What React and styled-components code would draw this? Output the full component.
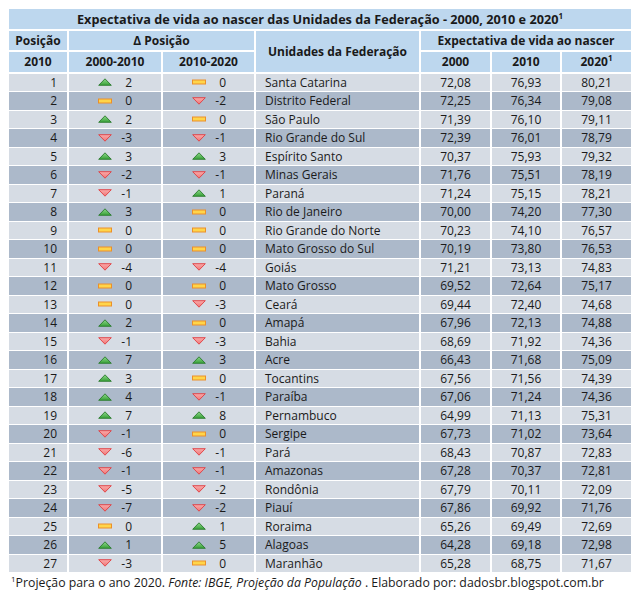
import styled, { createGlobalStyle } from "styled-components";

const GlobalStyle = createGlobalStyle`
  body {
    margin: 0;
    padding: 9px;
    background: #ffffff;
    font-family: "Open Sans", "Liberation Sans", sans-serif;
    font-size: 12px;
    color: #1a1a1a;
  }
`;

const COLS = "58px 92px 91px 163px 69px 68px 69px";

const rows = [
  ["Santa Catarina", 2, 0, "72,08", "76,93", "80,21"],
  ["Distrito Federal", 0, -2, "72,25", "76,34", "79,08"],
  ["São Paulo", 2, 0, "71,39", "76,10", "79,11"],
  ["Rio Grande do Sul", -3, -1, "72,39", "76,01", "78,79"],
  ["Espírito Santo", 3, 3, "70,37", "75,93", "79,32"],
  ["Minas Gerais", -2, -1, "71,76", "75,51", "78,19"],
  ["Paraná", -1, 1, "71,24", "75,15", "78,21"],
  ["Rio de Janeiro", 3, 0, "70,00", "74,20", "77,30"],
  ["Rio Grande do Norte", 0, 0, "70,23", "74,10", "76,57"],
  ["Mato Grosso do Sul", 0, 0, "70,19", "73,80", "76,53"],
  ["Goiás", -4, -4, "71,21", "73,13", "74,83"],
  ["Mato Grosso", 0, 0, "69,52", "72,64", "75,17"],
  ["Ceará", 0, -3, "69,44", "72,40", "74,68"],
  ["Amapá", 2, 0, "67,96", "72,13", "74,88"],
  ["Bahia", -1, -3, "68,69", "71,92", "74,36"],
  ["Acre", 7, 3, "66,43", "71,68", "75,09"],
  ["Tocantins", 3, 0, "67,56", "71,56", "74,39"],
  ["Paraíba", 4, -1, "67,06", "71,24", "74,36"],
  ["Pernambuco", 7, 8, "64,99", "71,13", "75,31"],
  ["Sergipe", -1, 0, "67,73", "71,02", "73,64"],
  ["Pará", -6, -1, "68,43", "70,87", "72,83"],
  ["Amazonas", -1, -1, "67,28", "70,37", "72,81"],
  ["Rondônia", -5, -2, "67,79", "70,11", "72,09"],
  ["Piauí", -7, -2, "67,86", "69,92", "71,76"],
  ["Roraima", 0, 1, "65,26", "69,49", "72,69"],
  ["Alagoas", 1, 5, "64,28", "69,18", "72,98"],
  ["Maranhão", -3, 0, "65,28", "68,75", "71,67"],
];

const Head = styled.div`
  display: grid;
  grid-template-columns: ${COLS};
  grid-template-rows: 19.5px 19.5px 19.5px;
  gap: 2px;
`;

const HeadCell = styled.div`
  background: #bdd7ee;
  font-weight: 700;
  font-size: ${(p) => p.$size || "12px"};
  display: flex;
  align-items: center;
  justify-content: center;
  white-space: nowrap;
  grid-column: ${(p) => p.$col || "auto"};
  grid-row: ${(p) => p.$row || "auto"};
`;

const Body = styled.div`
  display: flex;
  flex-direction: column;
  gap: 1px;
  margin-top: 2px;
`;

const Row = styled.div`
  display: grid;
  grid-template-columns: ${COLS};
  column-gap: 2px;
  height: 17.5px;
  & > div {
    background: ${(p) => (p.$dark ? "#acb9ca" : "#d6dce4")};
  }
`;

const Cell = styled.div`
  display: flex;
  align-items: center;
  white-space: nowrap;
  justify-content: ${(p) => p.$align || "center"};
  padding: 0 ${(p) => (p.$align === "flex-end" ? "10px" : "0")} 0
    ${(p) => (p.$align === "flex-start" ? "9px" : "0")};
`;

const DeltaCell = styled.div`
  display: flex;
  align-items: center;
  padding-left: 29px;
`;

const IconBox = styled.span`
  width: 14px;
  height: 8px;
  display: flex;
  align-items: center;
  justify-content: center;
`;

const DeltaNum = styled.span`
  width: 20px;
  text-align: right;
`;

const Sup = styled.sup`
  font-size: 8px;
  line-height: 0;
  vertical-align: 5px;
`;

const Note = styled.div`
  margin-top: 2px;
  padding-left: 2px;
  font-size: 12.3px;
  white-space: nowrap;
`;

const Up = () => (
  <svg width="14" height="8" viewBox="0 0 14 8">
    <defs>
      <linearGradient id="gUp" x1="0" y1="0" x2="0" y2="1">
        <stop offset="0" stopColor="#8fd88c" />
        <stop offset="1" stopColor="#36a036" />
      </linearGradient>
    </defs>
    <polygon points="7,0.8 13.3,7.3 0.7,7.3" fill="url(#gUp)" stroke="#2a7a2e" strokeWidth="0.9" />
  </svg>
);

const Down = () => (
  <svg width="14" height="8" viewBox="0 0 14 8">
    <defs>
      <linearGradient id="gDown" x1="0" y1="0" x2="0" y2="1">
        <stop offset="0" stopColor="#f9abab" />
        <stop offset="1" stopColor="#f07676" />
      </linearGradient>
    </defs>
    <polygon points="0.7,0.7 13.3,0.7 7,7.2" fill="url(#gDown)" stroke="#e03c40" strokeWidth="0.9" />
  </svg>
);

const Flat = () => (
  <svg width="14" height="8" viewBox="0 0 14 8">
    <rect x="0.5" y="2" width="13" height="4" fill="#ffd54a" stroke="#eb8f2a" strokeWidth="1" />
  </svg>
);

const Delta = ({ value }) => (
  <DeltaCell>
    <IconBox>{value > 0 ? <Up /> : value < 0 ? <Down /> : <Flat />}</IconBox>
    <DeltaNum>{value}</DeltaNum>
  </DeltaCell>
);

export default function App() {
  return (
    <>
      <GlobalStyle />
      <Head>
        <HeadCell $col="1 / 8" $row="1" $size="12.7px">
          <span>
            Expectativa de vida ao nascer das Unidades da Federação - 2000, 2010 e 2020<Sup>1</Sup>
          </span>
        </HeadCell>
        <HeadCell $col="1" $row="2">Posição</HeadCell>
        <HeadCell $col="2 / 4" $row="2">Δ Posição</HeadCell>
        <HeadCell $col="4" $row="2 / 4">Unidades da Federação</HeadCell>
        <HeadCell $col="5 / 8" $row="2">Expectativa de vida ao nascer</HeadCell>
        <HeadCell $col="1" $row="3">2010</HeadCell>
        <HeadCell $col="2" $row="3">2000-2010</HeadCell>
        <HeadCell $col="3" $row="3">2010-2020</HeadCell>
        <HeadCell $col="5" $row="3">2000</HeadCell>
        <HeadCell $col="6" $row="3">2010</HeadCell>
        <HeadCell $col="7" $row="3">
          <span>
            2020<Sup>1</Sup>
          </span>
        </HeadCell>
      </Head>
      <Body>
        {rows.map((r, i) => (
          <Row key={r[0]} $dark={i % 2 === 1}>
            <Cell $align="flex-end">{i + 1}</Cell>
            <Delta value={r[1]} />
            <Delta value={r[2]} />
            <Cell $align="flex-start">{r[0]}</Cell>
            <Cell>{r[3]}</Cell>
            <Cell>{r[4]}</Cell>
            <Cell>{r[5]}</Cell>
          </Row>
        ))}
      </Body>
      <Note>
        <Sup>1</Sup>Projeção para o ano 2020. <i>Fonte: IBGE, Projeção da População</i> . Elaborado por:
        dadosbr.blogspot.com.br
      </Note>
    </>
  );
}
